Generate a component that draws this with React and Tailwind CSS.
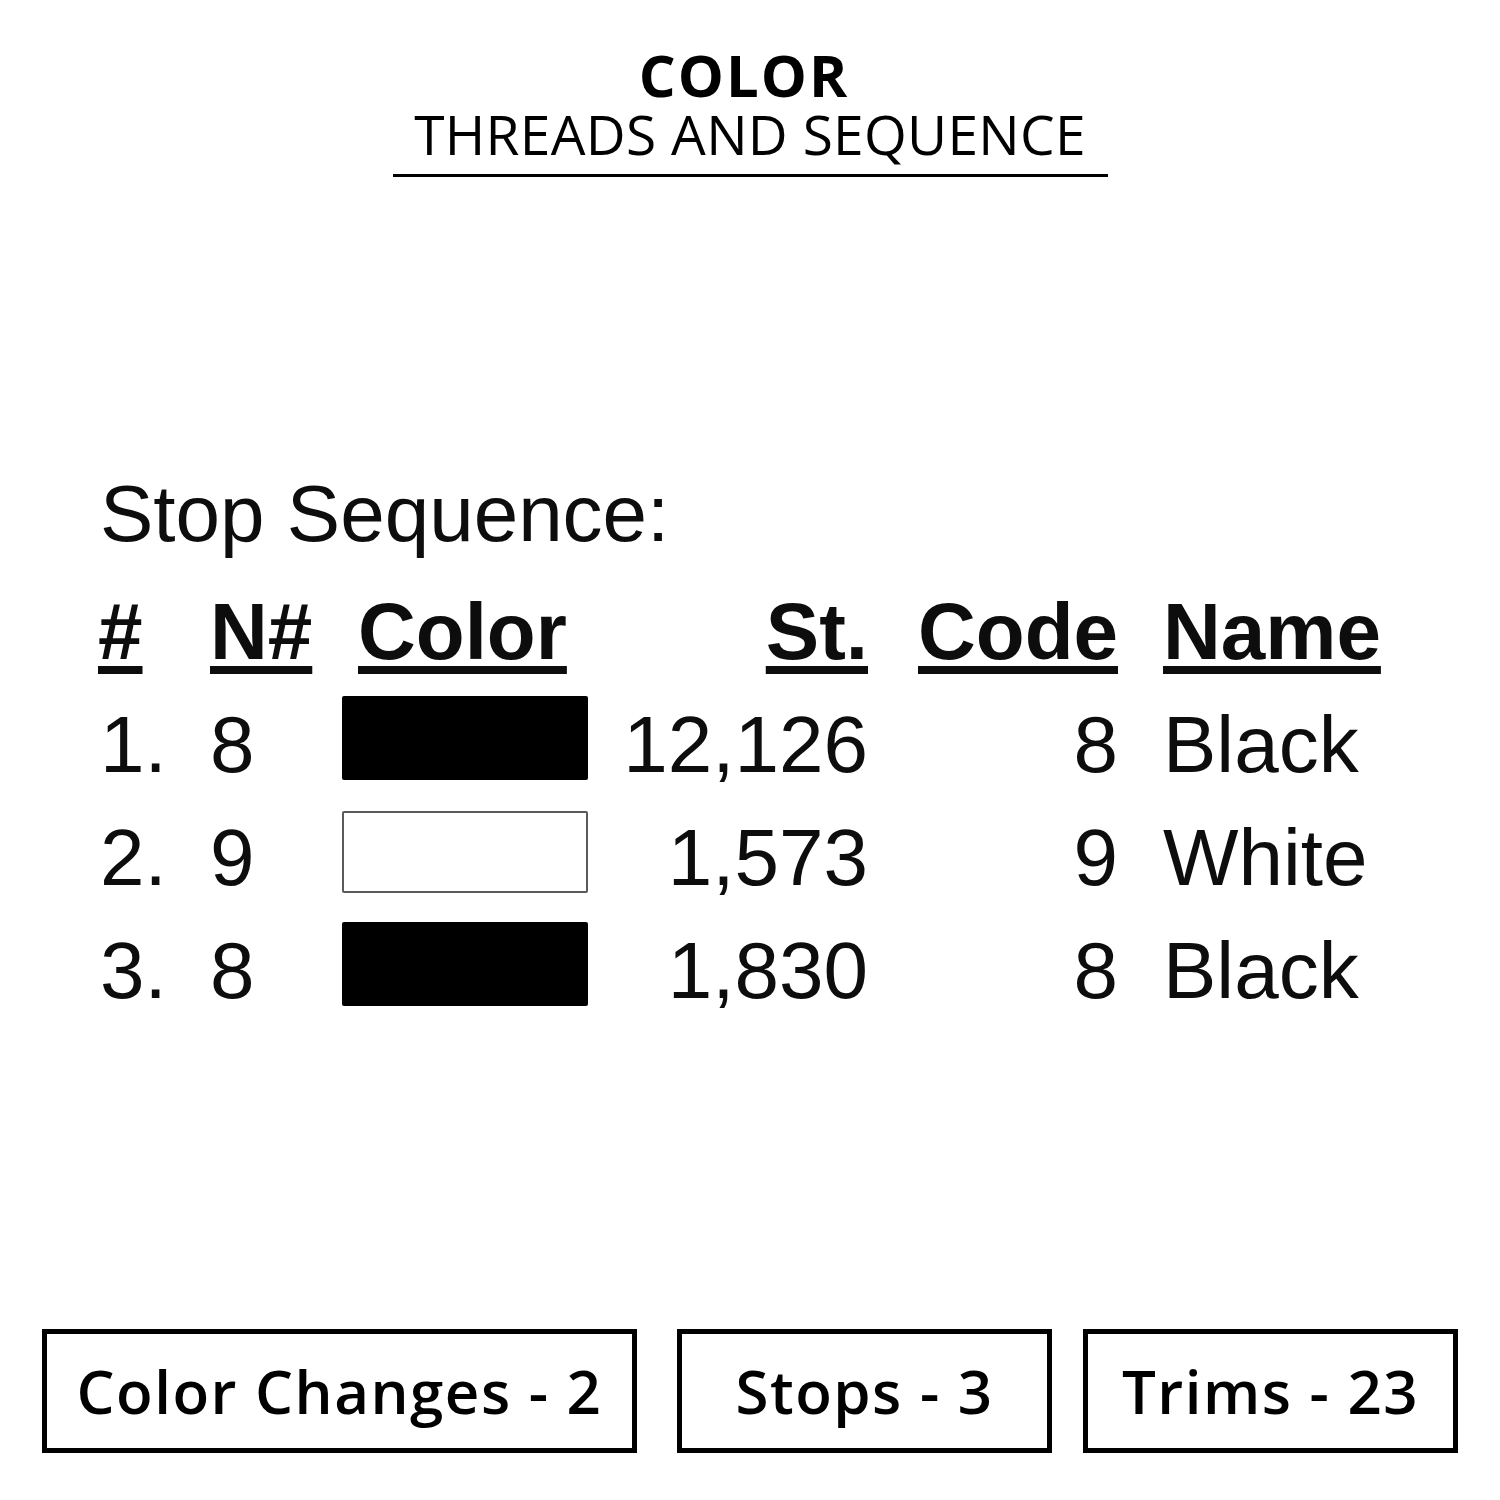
import React from 'react';

const rows = [
  { n: '1.', needle: '8', swatch: 'black', st: '12,126', code: '8', name: 'Black' },
  { n: '2.', needle: '9', swatch: 'white', st: '1,573', code: '9', name: 'White' },
  { n: '3.', needle: '8', swatch: 'black', st: '1,830', code: '8', name: 'Black' },
];

const head = "font-bold underline decoration-[8px] underline-offset-[7px] [text-decoration-skip-ink:none]";

export default function App() {
  return (
    <div className="w-[1500px] h-[1500px] bg-white text-black flex flex-col overflow-hidden">
      {/* Title */}
      <div className="mx-auto w-[715px] pt-[46px] pb-[15px] border-b-[3px] border-black text-center font-['Open_Sans',sans-serif]">
        <div className="text-[58px] leading-[58px] font-bold tracking-[2px] pr-[12px]">COLOR</div>
        <div className="mt-[5px] text-[55px] leading-[50px] font-normal tracking-[0.3px]">THREADS AND SEQUENCE</div>
      </div>

      {/* Stop sequence table */}
      <div className="mt-[280px] pl-[98px] font-['Liberation_Sans',Arial,sans-serif] text-[80px] text-[#0d0d0d]">
        <div className="leading-[113px] pl-[2px] mb-[5px]">Stop Sequence:</div>

        <div className="grid grid-cols-[112px_132px_246px_280px_250px_1fr] items-start leading-[113px]">
          <div className="h-[113px]"><span className={head}>#</span></div>
          <div className="h-[113px]"><span className={head}>N#</span></div>
          <div className="h-[113px] pl-[16px] whitespace-nowrap"><span className={head}>Color</span></div>
          <div className="h-[113px] text-right"><span className={head}>St.</span></div>
          <div className="h-[113px] text-right"><span className={head}>Code</span></div>
          <div className="h-[113px] pl-[45px]"><span className={head}>Name</span></div>

          {rows.map((r, i) => (
            <React.Fragment key={i}>
              <div className="h-[113px] pl-[2px]">{r.n}</div>
              <div className="h-[113px]">{r.needle}</div>
              <div className="h-[113px]">
                {r.swatch === 'black' ? (
                  <div className="mt-[8px] h-[84px] w-[246px] bg-black rounded-[2px]" />
                ) : (
                  <div className="mt-[10px] h-[82px] w-[246px] bg-white border-2 border-[#5a5a5a] rounded-[2px]" />
                )}
              </div>
              <div className="h-[113px] text-right">{r.st}</div>
              <div className="h-[113px] text-right">{r.code}</div>
              <div className="h-[113px] pl-[45px]">{r.name}</div>
            </React.Fragment>
          ))}
        </div>
      </div>

      {/* Summary boxes */}
      <div className="mt-auto flex pl-[42px] pb-[47px] font-['Open_Sans',sans-serif] text-[60px] font-semibold tracking-[1.5px]">
        <div className="w-[595px] h-[124px] border-[5px] border-black flex items-center justify-center">Color Changes - 2</div>
        <div className="ml-[40px] w-[375px] h-[124px] border-[5px] border-black flex items-center justify-center">Stops - 3</div>
        <div className="ml-[31px] w-[375px] h-[124px] border-[5px] border-black flex items-center justify-center">Trims - 23</div>
      </div>
    </div>
  );
}
